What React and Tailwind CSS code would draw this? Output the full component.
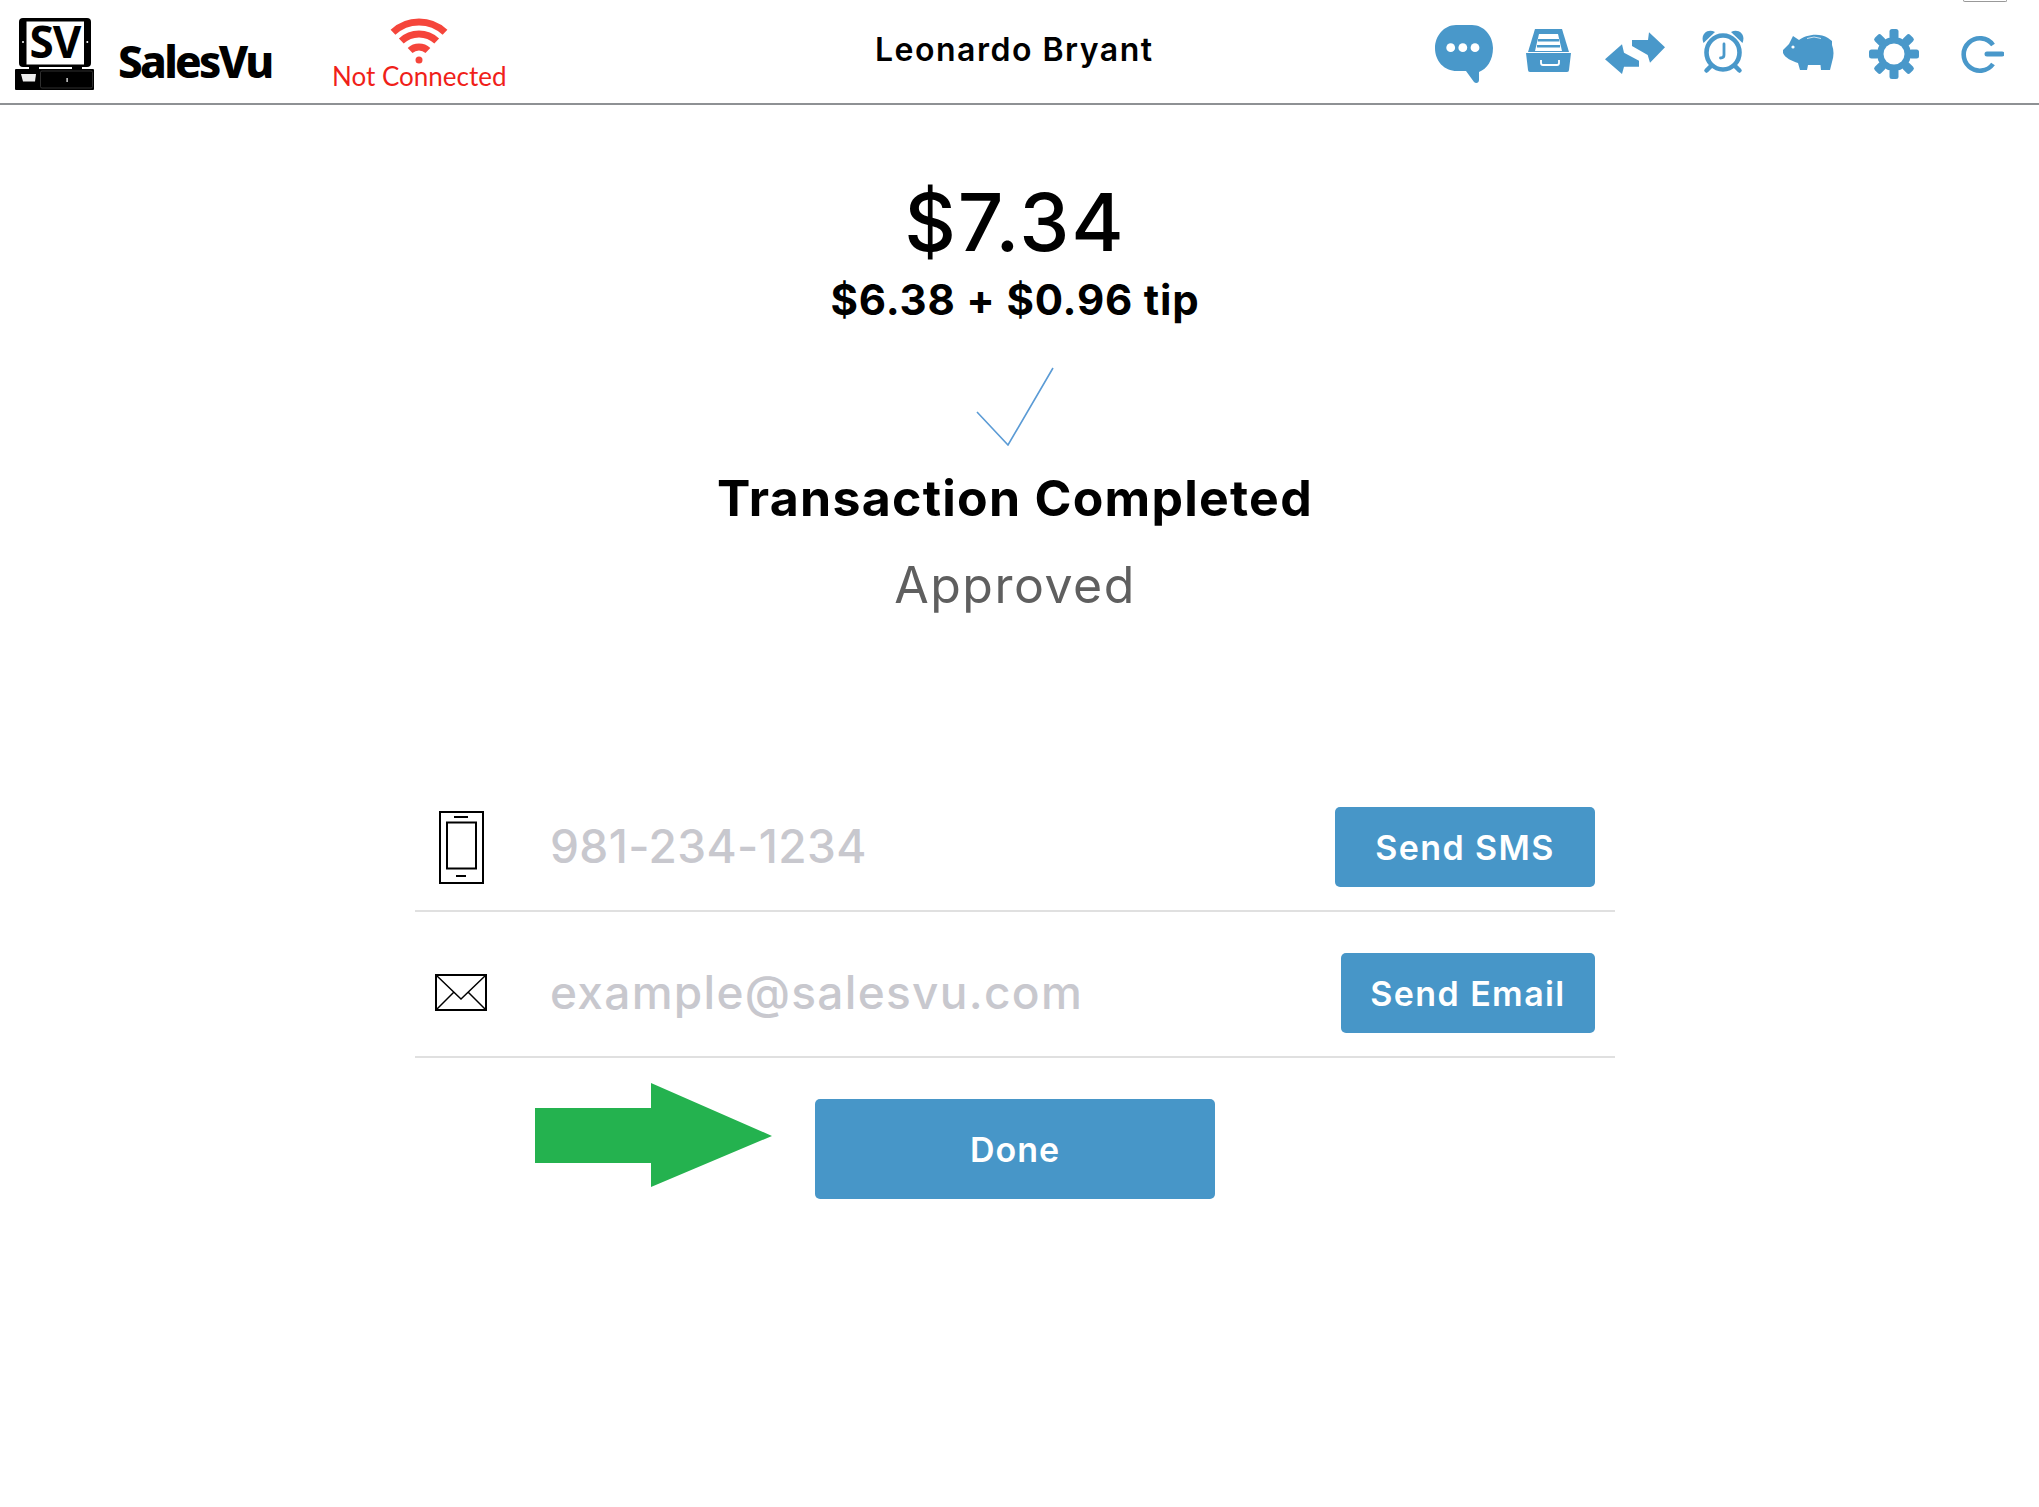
import React from "react";

const BLUE = "#4998ca";

function Logo() {
  return (
    <svg width="80" height="72" viewBox="0 0 80 72" className="mt-[-2px] overflow-visible">
      <rect x="4" y="0" width="72" height="49" rx="4" fill="#000" />
      <rect x="11.5" y="3.5" width="57.5" height="43" fill="#fff" />
      <circle cx="8" cy="24" r="1" fill="#fff" />
      <circle cx="72.3" cy="24" r="1" fill="#fff" />
      <text x="40" y="40" textAnchor="middle" fontFamily="'Open Sans', sans-serif" fontWeight="700" fontSize="44" letterSpacing="-1" fill="#000">SV</text>
      <rect x="14" y="48" width="10" height="4" fill="#000" />
      <rect x="57" y="48" width="10" height="4" fill="#000" />
      <rect x="0" y="51" width="79" height="21" rx="1" fill="#000" />
      <rect x="25.5" y="53" width="52" height="17" rx="1.5" fill="none" stroke="#444" strokeWidth="0.7" />
      <rect x="51.5" y="60" width="1.2" height="4" fill="#fff" />
      <path d="M6 56H21L20 63.5H8Z" fill="#eee" />
    </svg>
  );
}

function Wifi() {
  return (
    <svg width="60" height="46" viewBox="0 0 60 46" className="mx-auto block">
      <g fill="none" stroke="#f5453b" strokeWidth="7">
        <path d="M4 14.2A38 38 0 0 1 56 14.2" />
        <path d="M12.3 23A26 26 0 0 1 47.7 23" />
        <path d="M21.1 32.5A13 13 0 0 1 38.9 32.5" />
      </g>
      <circle cx="30" cy="42" r="3.5" fill="#f5453b" />
    </svg>
  );
}

// top bar icons, all 64 high so they share one baseline
function ChatIcon() {
  return (
    <svg width="58" height="64" viewBox="0 0 58 64">
      <path d="M21 5H37C49 5 58 16 58 28C58 40 52 49 44 52V60C44 63 41 64 39 62L31 51H22C9 51 0 41 0 28C0 16 9 5 21 5Z" fill={BLUE} />
      <circle cx="15.7" cy="27.7" r="4.4" fill="#fff" />
      <circle cx="27.8" cy="27.7" r="4.4" fill="#fff" />
      <circle cx="40" cy="27.7" r="4.4" fill="#fff" />
    </svg>
  );
}

function DrawerIcon() {
  return (
    <svg width="45" height="64" viewBox="0 0 45 64">
      <path d="M9 9H36L43 32H2Z" fill={BLUE} />
      <path d="M13 14H32L36 31H9Z" fill="#fff" />
      <rect x="12" y="19" width="21" height="2.5" fill={BLUE} />
      <rect x="11" y="25" width="23" height="2.5" fill={BLUE} />
      <path d="M0 33H45L43 50Q43 52 41 52H4Q2 52 2 50Z" fill={BLUE} />
      <path d="M15 40V43Q15 45 17 45H31Q33 45 33 43V40" fill="none" stroke="#fff" strokeWidth="1.8" />
    </svg>
  );
}

function TransferIcon() {
  return (
    <svg width="60" height="64" viewBox="0 0 60 64">
      <path d="M0 39.3L17 24.3L19 32.7L34 40.7V46.7H19L17 54Z" fill={BLUE} />
      <path d="M27 20H43L44 12.3L60 27.3L45 42.7L42.7 35L27 26Z" fill={BLUE} />
    </svg>
  );
}

function ClockIcon() {
  return (
    <svg width="42" height="64" viewBox="0 0 42 64">
      <path d="M1.5 23C-2 15 5 8 13 12Z" fill={BLUE} />
      <path d="M40.5 23C44 15 37 8 29 12Z" fill={BLUE} />
      <ellipse cx="21" cy="32.5" rx="16.5" ry="17" fill="none" stroke={BLUE} strokeWidth="4.6" />
      <path d="M9 46L4.5 50.5M33 46L37.5 50.5" stroke={BLUE} strokeWidth="4.5" strokeLinecap="round" />
      <path d="M22 24V35Q22 38 18.5 38" fill="none" stroke={BLUE} strokeWidth="2.8" strokeLinecap="round" />
    </svg>
  );
}

function PiggyIcon() {
  return (
    <svg width="51" height="64" viewBox="0 0 51 64">
      <path d="M0 30L6 24L10 16L16 20C22 15 36 12 45 18L49 21V25C51 30 51 36 49 42L47 50H38L37.5 45H25L24 50H17L15 43C9 41 2 38 0 33Z" fill={BLUE} />
      <circle cx="10" cy="27" r="1.6" fill="#fff" />
      <path d="M24 18.5Q31 15.5 38 18.5" fill="none" stroke="#cfe3f1" strokeWidth="1" />
    </svg>
  );
}

function GearIcon() {
  const angles = [0, 45, 90, 135, 180, 225, 270, 315];
  return (
    <svg width="50" height="64" viewBox="0 0 50 64">
      {angles.map((a) => (
        <rect key={a} x="20.5" y="9" width="9" height="10" rx="2.5" fill={BLUE} transform={`rotate(${a} 25 34)`} />
      ))}
      <circle cx="25" cy="34" r="17" fill={BLUE} />
      <circle cx="25" cy="34" r="10.5" fill="#fff" />
    </svg>
  );
}

function PowerIcon() {
  return (
    <svg width="43" height="64" viewBox="0 0 43 64">
      <path d="M32 25A16.2 16.2 0 1 0 32 44" fill="none" stroke={BLUE} strokeWidth="4.6" />
      <path d="M26 34H41" stroke={BLUE} strokeWidth="5" strokeLinecap="round" />
    </svg>
  );
}

function PhoneIcon() {
  return (
    <svg width="45" height="73" viewBox="0 0 45 73">
      <rect x="1" y="1" width="43" height="71" fill="none" stroke="#000" strokeWidth="2" />
      <rect x="8" y="11.5" width="29" height="46" fill="none" stroke="#000" strokeWidth="2" />
      <path d="M15 6H29M17 65H27" stroke="#000" strokeWidth="2" />
    </svg>
  );
}

function MailIcon() {
  return (
    <svg width="52" height="37" viewBox="0 0 52 37">
      <rect x="1" y="1" width="50" height="35" fill="none" stroke="#000" strokeWidth="2" />
      <path d="M1 1L26 25L51 1M1 36L19 18M51 36L33 18" fill="none" stroke="#000" strokeWidth="1.5" />
    </svg>
  );
}

function SendRow({ icon, iconClass, value, valueClass, label, btnClass }) {
  return (
    <div className="flex items-start pt-[41px] pb-[23px] border-b-2 border-[#e0e0e0]">
      <div className={iconClass}>{icon}</div>
      <span className={`flex-1 h-20 leading-[78px] text-[46px] font-medium text-[#c8c8ce] font-['Inter',sans-serif] ${valueClass}`}>{value}</span>
      <button className={`h-20 mr-5 rounded-[5px] bg-[#4796c8] text-white text-[34px] font-semibold tracking-[1.4px] font-['Inter',sans-serif] ${btnClass}`}>
        {label}
      </button>
    </div>
  );
}

export default function App() {
  return (
    <div className="relative min-h-[1507px] bg-white text-black font-['Inter',sans-serif]">
      <span className="absolute top-0 left-[1963px] w-[44px] h-[2px] border-x border-b border-[#999] rounded-b-sm"></span>

      <header className="flex items-start h-[105px] pt-5 border-b-2 border-[#8e9194]">
        <div className="flex items-start w-[875px] pl-[15px]">
          <Logo />
          <span className="ml-[23px] mt-[16px] w-[155px] text-[44px] leading-[50px] font-extrabold tracking-[-2.7px] font-['Noto_Sans',sans-serif]">SalesVu</span>
          <div className="ml-[59px] -mt-[2px] w-[174px]">
            <Wifi />
            <div className="-mt-[3px] text-[26px] leading-[30px] text-[#f01f1a] font-['Lato',sans-serif] whitespace-nowrap">Not Connected</div>
          </div>
        </div>
        <span className="mt-[10px] text-[32px] leading-10 font-semibold tracking-[1.5px] whitespace-nowrap">Leonardo Bryant</span>
        <div className="flex-1 flex justify-end pr-[35px]">
          <div className="flex items-start">
            <div className="mr-[33px]"><ChatIcon /></div>
            <div className="mr-[34px]"><DrawerIcon /></div>
            <div className="mr-[37px]"><TransferIcon /></div>
            <div className="mr-[39px]"><ClockIcon /></div>
            <div className="mr-[35px]"><PiggyIcon /></div>
            <div className="mr-[42px]"><GearIcon /></div>
            <PowerIcon />
          </div>
        </div>
      </header>

      <main className="w-[2030px] flex flex-col items-center pt-[69px]">
        <div className="text-[80px] leading-[96px] h-[96px] font-medium tracking-[1.8px]">$7.34</div>
        <div className="mt-[6px] text-[42px] leading-[48px] font-bold tracking-[0.8px]">$6.38 + $0.96 tip</div>
        <svg width="80" height="80" viewBox="0 0 80 80" className="mt-[42px]">
          <path d="M17 46L48 79L93 2" transform="translate(-15 0)" fill="none" stroke="#5b9bd5" strokeWidth="1.6" />
        </svg>
        <h1 className="mt-[22px] text-[50px] leading-[60px] font-bold tracking-[1.25px]">Transaction Completed</h1>
        <div className="mt-[27px] text-[50px] leading-[60px] text-[#5f5f5f] tracking-[1.5px]">Approved</div>

        <div className="mt-[151px] w-[1200px]">
          <SendRow icon={<PhoneIcon />} iconClass="w-[135px] pl-6 pt-[4px]" value="981-234-1234" valueClass="tracking-[0.4px]" label="Send SMS" btnClass="w-[260px]" />
          <SendRow icon={<MailIcon />} iconClass="w-[135px] pl-5 pt-[21px]" value="example@salesvu.com" valueClass="tracking-[1.3px]" label="Send Email" btnClass="w-[254px]" />
        </div>

        <button className="relative mt-[41px] w-[400px] h-[100px] rounded-[5px] bg-[#4796c8] text-white text-[34px] font-semibold tracking-[1px]">
          Done
          <svg width="237" height="104" viewBox="0 0 237 104" className="absolute right-full mr-[43px] top-[-16px]">
            <path d="M0 25H116V0L237 53L116 104V80H0Z" fill="#24b24f" />
          </svg>
        </button>
      </main>
    </div>
  );
}
